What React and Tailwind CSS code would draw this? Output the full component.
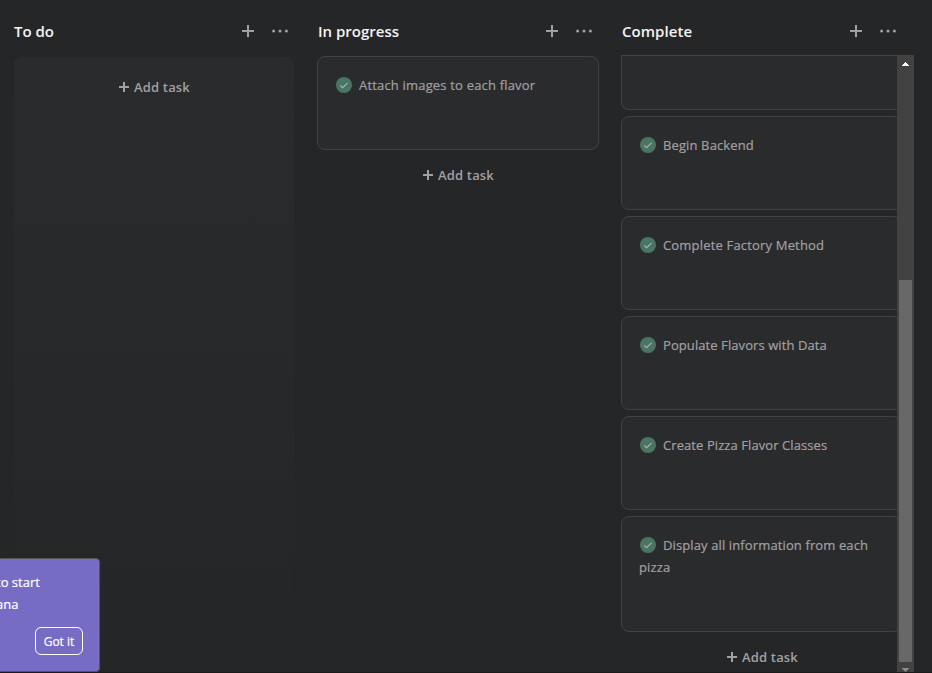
import React from "react";

function Plus({ size, weight }) {
  return (
    <svg width={size} height={size} viewBox={`0 0 ${size} ${size}`} className="shrink-0">
      <path d={`M${size / 2} 0V${size}M0 ${size / 2}H${size}`} stroke="#a2a0a2" strokeWidth={weight} />
    </svg>
  );
}

function Dots() {
  return (
    <svg width="16" height="4" viewBox="0 0 16 4" fill="#a2a0a2" className="shrink-0">
      <circle cx="1.6" cy="2" r="1.5" />
      <circle cx="8" cy="2" r="1.5" />
      <circle cx="14.4" cy="2" r="1.5" />
    </svg>
  );
}

function Check() {
  return (
    <svg width="16" height="16" viewBox="0 0 16 16" className="mr-[7px] ml-px inline-block align-[-3px]">
      <circle cx="8" cy="8" r="8" fill="#4a7564" />
      <path d="M4.3 8.5L6.7 10.7L11.5 5.9" fill="none" stroke="#a9b5af" strokeWidth="1.1" />
    </svg>
  );
}

function Header({ title, spacing }) {
  return (
    <header className="flex h-[55px] w-[280px] shrink-0 items-center pt-[7px]">
      <h2 className={`flex-1 whitespace-nowrap text-[15px] leading-[22px] font-semibold text-[#f5f4f3] ${spacing}`}>{title}</h2>
      <div className="mr-[6px] flex items-center gap-[18px]">
        <Plus size={12} weight={2} />
        <Dots />
      </div>
    </header>
  );
}

function AddTask() {
  return (
    <button className="flex h-[22px] items-center gap-[5px] pl-px text-[13px] leading-[22px] font-semibold tracking-[0.15px] text-[#a2a0a2]">
      <Plus size={10} weight={2} />
      <span className="whitespace-nowrap">Add task</span>
    </button>
  );
}

function Card({ title, tall, spacing }) {
  return (
    <article
      className={`w-[282px] shrink-0 rounded-lg border border-[#424244] bg-[#2a2b2d] px-[17px] pt-[17px] text-[13px] leading-[22px] text-[#a2a0a2] [-webkit-text-stroke:0.2px_#a2a0a2] ${spacing} ${tall ? "h-[116px]" : "h-[94px]"}`}
    >
      <Check />
      {title}
    </article>
  );
}

const completed = [
  { title: "Begin Backend", spacing: "tracking-[0.12px]" },
  { title: "Complete Factory Method", spacing: "tracking-[0.18px]" },
  { title: "Populate Flavors with Data", spacing: "tracking-[0.08px]" },
  { title: "Create Pizza Flavor Classes", spacing: "tracking-[0.08px]" },
  { title: "Display all information from each pizza", spacing: "tracking-[0.12px]", tall: true },
];

function Scrollbar() {
  return (
    <div className="flex w-[17px] shrink-0 flex-col items-center bg-[#424242]">
      <svg width="17" height="17" viewBox="0 0 17 17" className="shrink-0">
        <path d="M5 11V10H6V9H7V8H8V7H9V8H10V9H11V10H12V11Z" fill="#ffffff" />
      </svg>
      <div className="mt-[208px] h-[382px] w-[13px] shrink-0 bg-[#686868]" />
      <svg width="17" height="11" viewBox="0 0 17 11" className="shrink-0">
        <path d="M5 6H12V7H11V8H10V9H9V10H8V9H7V8H6V7H5Z" fill="#8b8b8b" />
      </svg>
    </div>
  );
}

export default function App() {
  return (
    <div className="relative h-[673px] w-[932px] overflow-hidden bg-[#252628] font-['Open_Sans','Noto_Sans',sans-serif]">
      <main className="flex h-full gap-6 pl-[14px]">
        <section className="flex w-[280px] shrink-0 flex-col">
          <Header title="To do" spacing="tracking-[0px]" />
          <div className="mt-[2px] flex h-[575px] items-start justify-center rounded-lg bg-linear-to-b from-[#2a2b2d] to-[#252628] pt-[19px]">
            <AddTask />
          </div>
        </section>

        <section className="flex w-[280px] shrink-0 flex-col">
          <Header title="In progress" spacing="tracking-[0px]" />
          <div className="-ml-px mt-px">
            <Card title="Attach images to each flavor" spacing="tracking-[0.18px]" />
          </div>
          <div className="mt-[14px] flex justify-center">
            <AddTask />
          </div>
        </section>

        <section className="flex w-[292px] shrink-0 flex-col">
          <Header title="Complete" spacing="tracking-[0.05px]" />
          <div className="-ml-px flex h-[618px] border-t border-[#424244]">
            <div className="flex w-[276px] shrink-0 flex-col gap-[6px] overflow-hidden">
              <div className="h-[54px] w-[282px] shrink-0 rounded-b-lg border border-t-0 border-[#424244] bg-[#2a2b2d]" />
              {completed.map((task) => (
                <Card key={task.title} {...task} />
              ))}
              <div className="mt-[8px] flex w-[282px] justify-center">
                <AddTask />
              </div>
            </div>
            <div className="-mt-px flex">
              <Scrollbar />
            </div>
          </div>
        </section>
      </main>

      <aside className="absolute -left-1 top-[558px] flex h-[114px] w-[104px] flex-col rounded-r-[4px] border border-[#565557] bg-[#766cc4] pt-[12px] text-[13px] text-white [-webkit-text-stroke:0.2px_white]">
        <p className="-ml-px leading-[22px] whitespace-nowrap">to start</p>
        <p className="-ml-px leading-[22px] whitespace-nowrap">ana</p>
        <button className="mt-[12px] mr-[16px] h-[28px] w-[48px] self-end rounded-[6px] border border-white text-center text-[12px] leading-[27px] whitespace-nowrap">
          Got it
        </button>
      </aside>
      <div className="absolute bottom-0 left-0 h-px w-full bg-[#1b1b1c]" />
    </div>
  );
}
